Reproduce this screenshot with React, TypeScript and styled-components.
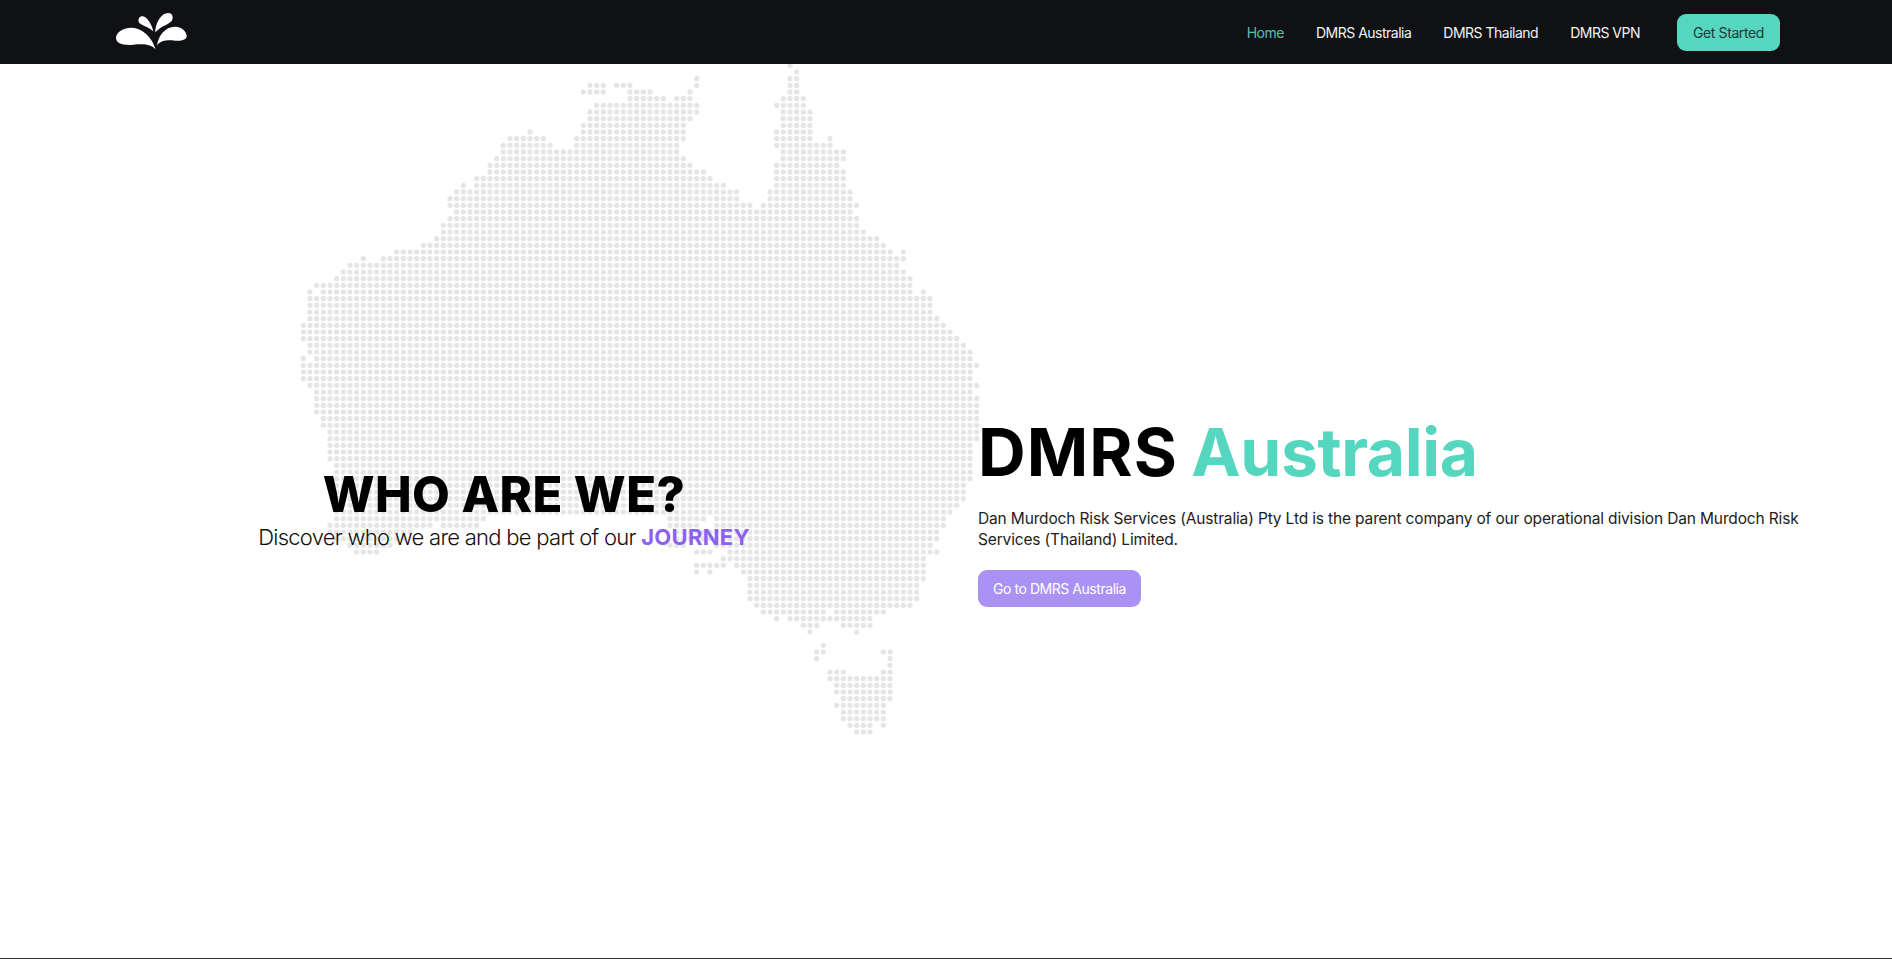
import styled, { createGlobalStyle } from 'styled-components'

type Span = [number, number]

// dot map of Australia: each entry is one row of column spans
const mapRows: Span[][] = [
    [[73, 73]],
    [[74, 74]],
    [[59, 59], [73, 74]],
    [[43, 45], [47, 49], [59, 59], [73, 74]],
    [[42, 45], [49, 52], [58, 58], [73, 74]],
    [[49, 54], [56, 58], [72, 75]],
    [[44, 59], [71, 75]],
    [[43, 59], [72, 76]],
    [[43, 58], [72, 76]],
    [[42, 57], [72, 76]],
    [[34, 34], [42, 57], [71, 76]],
    [[31, 36], [41, 57], [71, 76], [79, 79]],
    [[30, 37], [41, 56], [71, 79]],
    [[30, 56], [72, 81]],
    [[29, 57], [72, 81]],
    [[28, 58], [71, 80]],
    [[28, 60], [71, 81]],
    [[26, 61], [71, 81]],
    [[24, 24], [26, 63], [71, 81]],
    [[23, 65], [70, 82]],
    [[22, 65], [70, 82]],
    [[22, 67], [69, 83]],
    [[23, 82]],
    [[22, 83]],
    [[21, 83]],
    [[21, 84]],
    [[20, 86]],
    [[18, 87]],
    [[14, 88], [90, 90]],
    [[9, 9], [12, 90]],
    [[7, 89]],
    [[6, 90]],
    [[5, 91]],
    [[2, 91]],
    [[1, 1], [3, 91], [93, 93]],
    [[1, 94]],
    [[1, 94]],
    [[1, 94]],
    [[1, 95]],
    [[0, 96]],
    [[0, 97]],
    [[0, 98]],
    [[1, 99]],
    [[1, 100]],
    [[0, 0], [2, 100]],
    [[0, 101]],
    [[0, 100]],
    [[0, 100]],
    [[1, 101]],
    [[2, 100]],
    [[2, 101]],
    [[2, 101]],
    [[2, 101]],
    [[3, 101]],
    [[3, 101]],
    [[4, 101]],
    [[4, 101]],
    [[4, 100]],
    [[4, 100]],
    [[4, 100]],
    [[5, 100]],
    [[5, 100]],
    [[5, 100]],
    [[5, 99]],
    [[5, 99]],
    [[5, 99]],
    [[5, 98]],
    [[5, 97]],
    [[5, 27], [55, 60], [62, 96]],
    [[4, 19], [21, 26], [55, 59], [62, 96]],
    [[4, 16], [56, 95]],
    [[5, 15], [56, 95]],
    [[7, 13], [55, 57], [62, 94]],
    [[8, 11], [59, 61], [64, 95]],
    [[63, 93]],
    [[59, 63], [65, 93]],
    [[59, 59], [61, 61], [66, 93]],
    [[67, 93]],
    [[67, 92]],
    [[67, 92]],
    [[67, 92]],
    [[68, 91]],
    [[69, 78], [80, 87]],
    [[71, 71], [73, 85]],
    [[75, 77], [81, 85]],
    [[76, 76], [83, 83]],
    [],
    [[78, 78]],
    [[77, 78], [87, 88]],
    [[77, 77], [88, 88]],
    [[88, 88]],
    [[79, 81], [87, 88]],
    [[79, 88]],
    [[80, 88]],
    [[80, 88]],
    [[81, 88]],
    [[80, 87]],
    [[81, 87]],
    [[81, 87]],
    [[82, 85], [87, 87]],
    [[83, 85]],
]

const PITCH = 6.667

function DotMap() {
    const dots: { x: number; y: number }[] = []
    mapRows.forEach((spans, row) => {
        spans.forEach(([from, to]) => {
            for (let col = from; col <= to; col++) {
                dots.push({ x: 3.3 + col * PITCH, y: 1.3 + row * PITCH })
            }
        })
    })
    return (
        <MapSvg width="690" height="680" viewBox="0 0 690 680">
            {dots.map((d) => (
                <circle key={`${d.x}-${d.y}`} cx={d.x} cy={d.y} r="2.6" fill="#e5e5e5" />
            ))}
        </MapSvg>
    )
}

function Logo() {
    return (
        <svg width="71" height="38" viewBox="78 42 213 114" fill="#fff">
            <path d="M197 152C190 125 165 88 125 86C100 86 78 100 78 117C78 133 100 140 130 137C160 134 185 135 197 152Z" />
            <path d="M201 140C205 110 225 83 255 83C275 83 290 97 290 112C290 122 275 127 255 125C235 123 212 123 201 140Z" />
            <path d="M190 97C185 75 170 52 157 52C148 52 144 60 146 68C149 78 175 82 190 97Z" />
            <path d="M196 100C196 75 212 42 235 42C246 42 250 52 247 62C243 75 212 80 196 100Z" />
        </svg>
    )
}

export default function App() {
    return (
        <>
            <GlobalStyle />
            <Page>
                <Header>
                    <Logo />
                    <Nav>
                        <NavLink $active>Home</NavLink>
                        <NavLink>DMRS Australia</NavLink>
                        <NavLink>DMRS Thailand</NavLink>
                        <NavLink>DMRS VPN</NavLink>
                        <StartedButton>Get Started</StartedButton>
                    </Nav>
                </Header>
                <Hero>
                    <LeftColumn>
                        <DotMap />
                        <Intro>
                            <IntroTitle>WHO ARE WE?</IntroTitle>
                            <IntroText>
                                Discover who we are and be part of our <Journey>JOURNEY</Journey>
                            </IntroText>
                        </Intro>
                    </LeftColumn>
                    <RightColumn>
                        <Title>
                            DMRS <TitleAccent>Australia</TitleAccent>
                        </Title>
                        <Description>
                            Dan Murdoch Risk Services (Australia) Pty Ltd is the parent company of our
                            operational division Dan Murdoch Risk Services (Thailand) Limited.
                        </Description>
                        <GoButton>Go to DMRS Australia</GoButton>
                    </RightColumn>
                </Hero>
                <BottomLine />
            </Page>
        </>
    )
}

const GlobalStyle = createGlobalStyle`
    body {
        margin: 0;
        background: #fff;
        font-family: Inter, "Liberation Sans", sans-serif;
    }
`

const Page = styled.div`
    display: flex;
    flex-direction: column;
    height: 959px;
    overflow: hidden;
`

const Header = styled.header`
    align-items: center;
    background-color: #101115;
    display: flex;
    flex: none;
    height: 64px;
    justify-content: space-between;
    padding: 0 112px 0 116px;
`

const Nav = styled.nav`
    align-items: center;
    display: flex;
    gap: 32px;
`

const NavLink = styled.a<{ $active?: boolean }>`
    color: ${(p) => (p.$active ? '#4fc4ac' : '#f2f2f2')};
    font-size: 14px;
    letter-spacing: -0.5px;
`

const StartedButton = styled.button`
    background-color: #55d6be;
    border: none;
    border-radius: 9px;
    color: #24363a;
    font-family: inherit;
    font-size: 14px;
    height: 37px;
    letter-spacing: -0.4px;
    margin-left: 5px;
    width: 103px;
`

const Hero = styled.main`
    display: flex;
    flex: 1;
    min-height: 0;
`

const LeftColumn = styled.section`
    display: grid;
    flex: none;
    grid-template-columns: minmax(0, 1fr);
    margin-left: 30px;
    width: 948px;
`

const MapSvg = styled.svg`
    align-self: start;
    grid-area: 1 / 1;
    margin-left: 270px;
`

const Intro = styled.div`
    align-self: center;
    grid-area: 1 / 1;
    justify-self: center;
    margin-top: -4px;
    text-align: center;
`

const IntroTitle = styled.h2`
    color: #000;
    font-size: 49px;
    font-weight: 800;
    letter-spacing: 0.4px;
    line-height: 56px;
    margin: 0;
`

const IntroText = styled.p`
    color: #111;
    font-size: 22px;
    font-weight: 300;
    letter-spacing: -0.72px;
    line-height: 28px;
    margin: 0;
`

const Journey = styled.span`
    color: #8b62ee;
    font-weight: 700;
    letter-spacing: 0.3px;
`

const RightColumn = styled.section`
    align-self: center;
    flex: none;
    margin-top: -3px;
    width: 826px;
`

const Title = styled.h1`
    color: #000;
    font-size: 66px;
    font-weight: 700;
    letter-spacing: 1.1px;
    line-height: 80px;
    margin: 0;
    word-spacing: -3.5px;
`

const TitleAccent = styled.span`
    color: #55d6be;
    letter-spacing: -0.4px;
`

const Description = styled.p`
    color: #222;
    font-size: 15.5px;
    font-weight: 400;
    letter-spacing: -0.15px;
    line-height: 21px;
    margin: 16px 0 20px;
`

const GoButton = styled.button`
    background-color: #a992f3;
    border: none;
    border-radius: 9px;
    color: #fff;
    display: block;
    font-family: inherit;
    font-size: 14px;
    height: 37px;
    letter-spacing: -0.45px;
    width: 163px;
`

const BottomLine = styled.div`
    background-color: #333;
    flex: none;
    height: 1px;
`
